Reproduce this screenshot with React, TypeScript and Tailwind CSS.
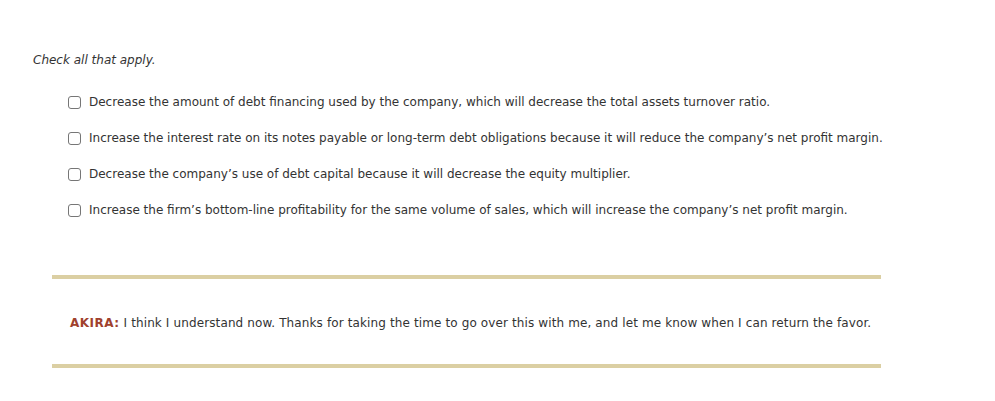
import React from "react";

const options = [
  "Decrease the amount of debt financing used by the company, which will decrease the total assets turnover ratio.",
  "Increase the interest rate on its notes payable or long-term debt obligations because it will reduce the company\u2019s net profit margin.",
  "Decrease the company\u2019s use of debt capital because it will decrease the equity multiplier.",
  "Increase the firm\u2019s bottom-line profitability for the same volume of sales, which will increase the company\u2019s net profit margin.",
];

export default function App() {
  return (
    <div
      className="w-[995px] h-[401px] bg-white text-[#333333] text-[12px]"
      style={{ fontFamily: '"DejaVu Sans", Verdana, sans-serif' }}
    >
      <div className="pt-[52px] pl-[33px]">
        <p className="italic leading-[16px] text-[#333]">Check all that apply.</p>
      </div>
      <div className="pl-[68px] pt-[26px] flex flex-col gap-[20px]">
        {options.map((o) => (
          <label key={o} className="flex items-center gap-[8px] h-[16px]">
            <span className="w-[13px] h-[13px] rounded-[3px] border border-[#767676] bg-white shrink-0" />
            <span className="leading-[16px]">{o}</span>
          </label>
        ))}
      </div>
      <div className="ml-[52px] w-[829px] mt-[57px] h-[4px] bg-[#dbcfa3]" />
      <div className="ml-[70px] mt-[36px] leading-[16px] tracking-[0.12px]">
        <span className="font-bold text-[#a0412d] tracking-[0.5px]">AKIRA:</span>{" "}
        I think I understand now. Thanks for taking the time to go over this with me, and let me know when I can return the favor.
      </div>
      <div className="ml-[52px] w-[829px] mt-[33px] h-[4px] bg-[#dbcfa3]" />
    </div>
  );
}
